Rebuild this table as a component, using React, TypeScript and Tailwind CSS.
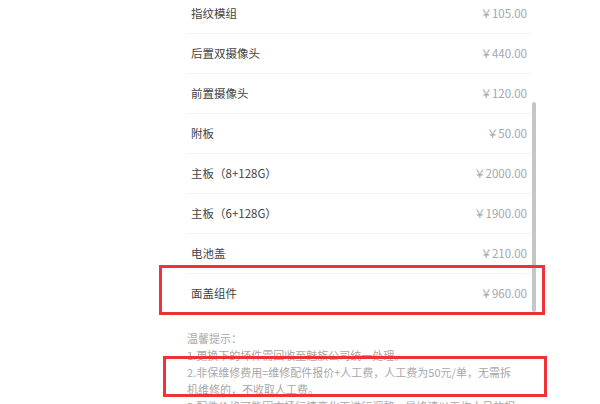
import React from 'react';

const parts = [
    { name: '指纹模组', price: '￥105.00' },
    { name: '后置双摄像头', price: '￥440.00' },
    { name: '前置摄像头', price: '￥120.00' },
    { name: '附板', price: '￥50.00' },
    { name: '主板（8+128G）', price: '￥2000.00' },
    { name: '主板（6+128G）', price: '￥1900.00' },
    { name: '电池盖', price: '￥210.00' },
    { name: '面盖组件', price: '￥960.00' },
];

export default function App() {
    return (
        <div
            className="relative w-[600px] h-[404px] overflow-hidden bg-white"
            style={{ fontFamily: '"Noto Sans CJK SC", "Noto Sans", sans-serif' }}
        >
            <div className="flex ml-[187px] -mt-[6px]">
                <div className="w-[345px]">
                    {parts.map((p) => (
                        <div
                            key={p.name}
                            className="flex items-center justify-between h-[40px] pl-[4px] pr-[5px] border-b border-[#f2f2f2]"
                        >
                            <span className="text-[11.5px] text-[#444]">{p.name}</span>
                            <span className="text-[11.5px] text-[#a3a7ae]">{p.price}</span>
                        </div>
                    ))}
                </div>
                <div className="w-[4px] pt-[108px]">
                    <div className="w-[4px] h-[210px] rounded-full bg-[#c6c6c6]" />
                </div>
            </div>

            <div className="ml-[187px] mt-[16px] text-[11px] leading-[17px] text-[#a8a8a8] whitespace-nowrap">
                <div>温馨提示：</div>
                <div>1.更换下的坏件需回收至魅族公司统一处理。</div>
                <div>2.非保维修费用=维修配件报价+人工费，人工费为50元/单，无需拆</div>
                <div>机维修的，不收取人工费。</div>
                <div>3.配件价格可能因市场行情变化而进行调整，最终请以工作人员的报</div>
            </div>

            {/* annotation boxes */}
            <div className="absolute left-[159px] top-[265px] w-[386px] h-[50px] border-[3px] border-[#ee3338]" />
            <div className="absolute left-[163px] top-[356px] w-[384px] h-[41px] border-[3px] border-[#ee3338]" />
        </div>
    );
}
